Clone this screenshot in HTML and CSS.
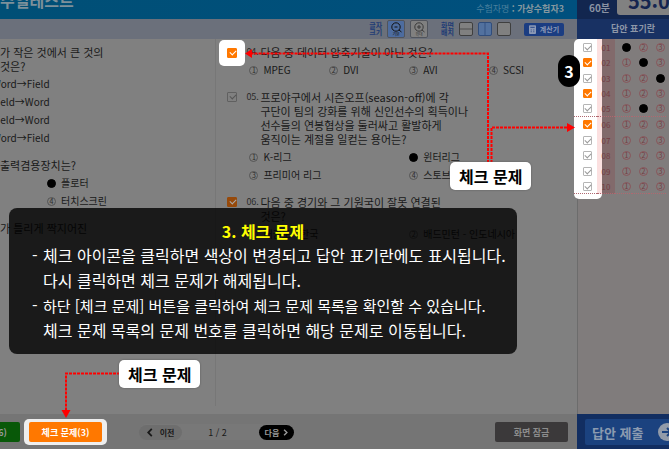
FILE: index.html
```html
<!DOCTYPE html>
<html lang="ko">
<head>
<meta charset="utf-8">
<title>수험 화면 안내 - 체크 문제</title>
<link rel="stylesheet" href="styles.css">
</head>
<body>
<div class="app">
  <header class="topbar">
    <h1 class="title">주일테스트</h1>
    <p class="examinee">수험자명 <b>: 가상수험자3</b></p>
  </header>
  <div class="timer">
    <span class="timer-total">60분</span>
    <span class="timer-left">55:07</span>
  </div>

  <div class="toolbar">
    <span class="tool-label">글자<br>크기</span>
    <button class="zoom zoom-on" type="button"><svg viewBox="0 0 18 18"><circle cx="9" cy="7" r="4.200"/><path d="M12 10l2.500 2M7.500 7h3"/></svg><span>기본</span></button>
    <button class="zoom" type="button"><svg viewBox="0 0 18 18"><circle cx="9" cy="7" r="4.200"/><path d="M12 10l2.500 2M7 7h4M9 5v4"/></svg><span>확대</span></button>
    <span class="tool-label tool-label-layout">화면<br>배치</span>
    <button class="layout" type="button" aria-label="가로 분할"><svg viewBox="0 0 14 14"><path d="M0 7h14"/></svg></button>
    <button class="layout layout-on" type="button" aria-label="세로 분할"><svg viewBox="0 0 14 14"><path d="M7 0v14"/></svg></button>
    <button class="layout" type="button" aria-label="한 화면"></button>
    <button class="calc" type="button"><svg viewBox="0 0 8 10"><rect width="8" height="10" rx="1" fill="#8c99b5"/><path d="M1.500 2.500h5M2 5.500h1M5 5.500h1M2 7.500h1M5 7.500h1" stroke="#1b3d82"/></svg>계산기</button>
  </div>
  <h2 class="sheet-title">답안 표기란</h2>

  <main class="questions">
    <section class="pane pane-left">
      <article class="question">
        <p class="stem">가 작은 것에서 큰 것의<br>것은?</p>
        <ul class="choices choices-cut">
          <li>Word→Field</li>
          <li>Field→Word</li>
          <li>Field→Word</li>
          <li>Word→Field</li>
        </ul>
      </article>
      <article class="question">
        <p class="stem">출력겸용장치는?</p>
        <ul class="choices choices-second">
          <li><i class="num picked"></i>플로터</li>
          <li><i class="num">4</i>터치스크린</li>
        </ul>
      </article>
      <article class="question">
        <p class="stem">가 틀리게 짝지어진</p>
      </article>
    </section>
    <section class="pane pane-right">
      <article class="question numbered">
        <input class="check" type="checkbox" aria-label="4번 체크" checked>
        <span class="qno">04.</span>
        <p class="stem">다음 중 데이터 압축기술이 아닌 것은?</p>
        <ul class="choices four">
          <li><i class="num">1</i>MPEG</li>
          <li><i class="num">2</i>DVI</li>
          <li><i class="num">3</i>AVI</li>
          <li><i class="num">4</i>SCSI</li>
        </ul>
      </article>
      <article class="question numbered">
        <input class="check" type="checkbox" aria-label="5번 체크">
        <span class="qno">05.</span>
        <p class="stem">프로야구에서 시즌오프(season-off)에 각<br>구단이 팀의 강화를 위해 신인선수의 획득이나<br>선수들의 연봉협상을 둘러싸고 활발하게<br>움직이는 계절을 일컫는 용어는?</p>
        <ul class="choices two">
          <li><i class="num">1</i>K-리그</li>
          <li><i class="num picked"></i>윈터리그</li>
          <li><i class="num">3</i>프리미어 리그</li>
          <li><i class="num">4</i>스토브리그</li>
        </ul>
      </article>
      <article class="question numbered">
        <input class="check" type="checkbox" aria-label="6번 체크" checked>
        <span class="qno">06.</span>
        <p class="stem">다음 중 경기와 그 기원국이 잘못 연결된<br>것은?</p>
        <ul class="choices two">
          <li><i class="num">1</i>태권도 - 한국</li>
          <li><i class="num">2</i>배드민턴 - 인도네시아</li>
        </ul>
      </article>
    </section>
  </main>

  <aside class="sheet">
    <table class="answers">
      <tbody>
        <tr><td><input class="check" type="checkbox" aria-label="01 체크"></td><th scope="row">01</th><td><input class="bubble" type="radio" name="a1" value="1" aria-label="1" checked></td><td><input class="bubble" type="radio" name="a1" value="2" aria-label="2"></td><td><input class="bubble" type="radio" name="a1" value="3" aria-label="3"></td></tr>
        <tr><td><input class="check" type="checkbox" aria-label="02 체크" checked></td><th scope="row">02</th><td><input class="bubble" type="radio" name="a2" value="1" aria-label="1"></td><td><input class="bubble" type="radio" name="a2" value="2" aria-label="2" checked></td><td><input class="bubble" type="radio" name="a2" value="3" aria-label="3"></td></tr>
        <tr><td><input class="check" type="checkbox" aria-label="03 체크"></td><th scope="row">03</th><td><input class="bubble" type="radio" name="a3" value="1" aria-label="1"></td><td><input class="bubble" type="radio" name="a3" value="2" aria-label="2"></td><td><input class="bubble" type="radio" name="a3" value="3" aria-label="3" checked></td></tr>
        <tr><td><input class="check" type="checkbox" aria-label="04 체크" checked></td><th scope="row">04</th><td><input class="bubble" type="radio" name="a4" value="1" aria-label="1"></td><td><input class="bubble" type="radio" name="a4" value="2" aria-label="2"></td><td><input class="bubble" type="radio" name="a4" value="3" aria-label="3"></td></tr>
        <tr class="group-end"><td><input class="check" type="checkbox" aria-label="05 체크"></td><th scope="row">05</th><td><input class="bubble" type="radio" name="a5" value="1" aria-label="1"></td><td><input class="bubble" type="radio" name="a5" value="2" aria-label="2" checked></td><td><input class="bubble" type="radio" name="a5" value="3" aria-label="3"></td></tr>
        <tr><td><input class="check" type="checkbox" aria-label="06 체크" checked></td><th scope="row">06</th><td><input class="bubble" type="radio" name="a6" value="1" aria-label="1"></td><td><input class="bubble" type="radio" name="a6" value="2" aria-label="2"></td><td><input class="bubble" type="radio" name="a6" value="3" aria-label="3"></td></tr>
        <tr><td><input class="check" type="checkbox" aria-label="07 체크"></td><th scope="row">07</th><td><input class="bubble" type="radio" name="a7" value="1" aria-label="1"></td><td><input class="bubble" type="radio" name="a7" value="2" aria-label="2"></td><td><input class="bubble" type="radio" name="a7" value="3" aria-label="3"></td></tr>
        <tr><td><input class="check" type="checkbox" aria-label="08 체크"></td><th scope="row">08</th><td><input class="bubble" type="radio" name="a8" value="1" aria-label="1"></td><td><input class="bubble" type="radio" name="a8" value="2" aria-label="2"></td><td><input class="bubble" type="radio" name="a8" value="3" aria-label="3"></td></tr>
        <tr><td><input class="check" type="checkbox" aria-label="09 체크"></td><th scope="row">09</th><td><input class="bubble" type="radio" name="a9" value="1" aria-label="1"></td><td><input class="bubble" type="radio" name="a9" value="2" aria-label="2"></td><td><input class="bubble" type="radio" name="a9" value="3" aria-label="3"></td></tr>
        <tr class="group-end"><td><input class="check" type="checkbox" aria-label="10 체크"></td><th scope="row">10</th><td><input class="bubble" type="radio" name="a10" value="1" aria-label="1"></td><td><input class="bubble" type="radio" name="a10" value="2" aria-label="2"></td><td><input class="bubble" type="radio" name="a10" value="3" aria-label="3"></td></tr>
      </tbody>
    </table>
  </aside>

  <footer class="bottombar">
    <button class="btn btn-unsolved" type="button">(6)</button>
    <span class="spot-button"><button class="btn btn-check" type="button">체크 문제(3)</button></span>
    <nav class="pager">
      <button class="page-prev" type="button"><svg viewBox="0 0 6 10"><path d="M5 1L1 5l4 4"/></svg>이전</button>
      <span class="page-now">1 / 2</span>
      <button class="page-next" type="button">다음<svg viewBox="0 0 6 10"><path d="M1 1l4 4-4 4"/></svg></button>
    </nav>
    <button class="btn btn-lock" type="button">화면 잠금</button>
  </footer>
  <div class="submitbar">
    <button class="submit" type="button">답안 제출<svg viewBox="0 0 18 18"><circle cx="9" cy="9" r="9" fill="#929ba9"/><path d="M4 9h9M9 5l4 4-4 4" fill="none" stroke="#1b427f" stroke-width="2"/></svg></button>
  </div>

  <div class="spot-question"><span class="check check-lit"></span></div>

  <section class="guide">
    <h2>3. 체크 문제</h2>
    <ul>
      <li>체크 아이콘을 클릭하면 색상이 변경되고 답안 표기란에도 표시됩니다.<br>다시 클릭하면 체크 문제가 해제됩니다.</li>
      <li><span class="dense">하단 [체크 문제] 버튼을 클릭하여 체크 문제 목록을 확인할 수 있습니다.</span><br>체크 문제 목록의 문제 번호를 클릭하면 해당 문제로 이동됩니다.</li>
    </ul>
  </section>

  <svg class="arrows" width="669" height="449" viewBox="0 0 669 449" aria-hidden="true">
    <g fill="none" stroke="#f00" stroke-width="2" stroke-dasharray="3 1">
      <path d="M488 163V53.500H252"/>
      <path d="M491.500 163V127.500H568"/>
      <path d="M120 373.500H66V411"/>
    </g>
    <path fill="#f00" d="M245 53.500l7-4.500v9zM575 127.500l-8-4.500v9zM66 418l-4.500-8h9z"/>
  </svg>
  <div class="callout callout-list">체크 문제</div>
  <div class="callout callout-button">체크 문제</div>
  <div class="step">3</div>
</div>
</body>
</html>
```
FILE: styles.css
```css
* { box-sizing: border-box; }
body, h1, h2, p, ul { margin: 0; padding: 0; }
ul { list-style: none; }
body {
  overflow: hidden;
  font-family: "Noto Sans CJK KR", "Noto Sans", sans-serif;
  font-size: 10px;
  color: #191919;
}
button {
  border: 0;
  padding: 0;
  font: inherit;
  color: inherit;
  white-space: nowrap;
}
.app {
  position: relative;
  display: grid;
  grid-template-columns: minmax(0, 1fr) 92px;
  grid-template-rows: 19px 20px 1fr 35px;
  height: 100vh;
  overflow: hidden;
  background: #808080;
}

/* top bar */
.topbar {
  display: flex;
  justify-content: space-between;
  padding-right: 13px;
  background: linear-gradient(90deg, #004f76, #00507e);
}
.title {
  height: 20px;
  margin-top: -10px;
  font-size: 16px;
  line-height: 20px;
  color: #7d909a;
}
.examinee { font-size: 9px; line-height: 18px; color: #487f9c; }
.examinee b { color: #86989f; }
.timer {
  display: flex;
  justify-content: space-between;
  padding-left: 12px;
  background: #12264f;
  overflow: hidden;
}
.timer-total { font-size: 10px; font-weight: 700; line-height: 15px; color: #8a93a3; }
.timer-left {
  width: 52px;
  height: 15px;
  padding-left: 11px;
  border-radius: 0 0 0 3px;
  background: #818181;
  color: #152550;
  font: 700 20px/1px "Noto Sans CJK KR", sans-serif;
}

/* tools */
.toolbar {
  display: flex;
  align-items: center;
  justify-content: flex-end;
  gap: 5px;
  padding-right: 13px;
  background: #6b707b;
}
.tool-label { font-size: 7px; font-weight: 700; line-height: 7px; color: #1f3c75; }
.tool-label-layout { margin-left: 8px; }
.zoom {
  display: flex;
  flex-direction: column;
  align-items: center;
  position: relative;
  width: 18px;
  height: 18px;
  border: 1px solid #50545c;
  border-radius: 2px;
  background: #808080;
  color: #3a3a3a;
}
.zoom-on { background: #4d6c9f; color: #111; }
.zoom svg { width: 18px; height: 18px; flex: none; margin-top: -1px; fill: none; stroke: currentColor; }
.zoom span { position: absolute; bottom: 0; font-size: 4px; line-height: 5px; }
.layout {
  display: flex;
  width: 14px;
  height: 14px;
  border: 1px solid #3f3f3f;
  border-radius: 2px;
  background: #808080;
}
.layout-on { background: #52719f; border-color: #304d7c; }
.layout svg { width: 12px; height: 12px; stroke: #444; }
.layout-on svg { stroke: #304d7c; }
.calc {
  display: flex;
  align-items: center;
  justify-content: center;
  gap: 4px;
  width: 40px;
  height: 13px;
  margin-left: 8px;
  border-radius: 2px;
  background: #1b3d82;
  color: #8c99b5;
  font-size: 7px;
  font-weight: 700;
}
.calc svg { width: 7px; height: 9px; }
.sheet-title {
  padding-left: 20px;
  background: #183163;
  color: #8d97a8;
  font-size: 9px;
  line-height: 20px;
  text-align: center;
}

/* questions */
.questions { display: grid; grid-template-columns: 3fr 5fr; min-height: 0; padding-bottom: 8px; }
.pane { padding-top: 6px; white-space: nowrap; }
.pane-left { border-right: 1px solid #777; }
.pane-right { padding: 6px 8px 0 11px; }
.question { margin-bottom: 11px; }
.numbered { display: grid; grid-template-columns: 19px 14px minmax(0, 1fr); }
.stem { font-size: 11px; line-height: 14px; }
.qno { line-height: 14px; color: #2b2b2b; font-size: 9px; }
.choices { margin-top: 2px; font-size: 10px; line-height: 18px; }
.choices li { display: flex; align-items: center; gap: 5px; }
.choices-cut { margin-left: -8px; }
.choices-second { padding-left: 47px; }
.numbered .choices { grid-column: 1 / -1; display: grid; padding-left: 22px; }
.four { grid-template-columns: repeat(4, 1fr); }
.two { grid-template-columns: repeat(2, 1fr); }
.num {
  width: 9px;
  height: 9px;
  border: 1px solid #555;
  border-radius: 50%;
  font-size: 7px;
  font-style: normal;
  line-height: 7px;
  text-align: center;
  color: #2b2b2b;
}
.picked { background: #000; border-color: #000; }

/* tick boxes */
.check {
  appearance: none;
  display: block;
  position: relative;
  width: 10px;
  height: 10px;
  margin: 2px 0;
  border: 1px solid #606060;
  border-radius: 1px;
}
.check::after {
  content: "";
  position: absolute;
  left: 2px;
  top: 1px;
  width: 5px;
  height: 3px;
  border: solid #555;
  border-width: 0 0 1px 1px;
  transform: rotate(-45deg);
}
.check:checked { background: #96490a; border-color: #96490a; }
.check:checked::after { border-color: #aaa; }
.answers .check { width: 9px; height: 9px; margin: 0 auto; border-color: #b5b5b5; }
.answers .check::after { left: 1px; border-color: #999; }
.answers .check:checked, .check-lit { background: #ff7800; border-color: #ff7800; }
.answers .check:checked::after, .check-lit::after { border-color: #fff; }

/* answer sheet */
.sheet {
  position: relative;
  min-width: 0;
  border-left: 1px solid #6c6c6c;
  background: #807c7c;
}
.answers {
  width: 92px;
  margin-left: -4px;
  border-spacing: 0;
  table-layout: fixed;
  border-radius: 5px 0 0 0;
  background: linear-gradient(#fff, #fff) 0 0 / 28px 100% no-repeat;
}
.sheet::after {
  content: "";
  position: absolute;
  left: -4px;
  top: 155px;
  width: 28px;
  height: 5px;
  border-radius: 0 0 5px 5px;
  background: #fff;
}
.answers tr:nth-child(odd) { height: 16px; }
.answers tr:nth-child(even) { height: 15px; }
.answers td, .answers th { padding: 0; text-align: center; vertical-align: middle; }
.answers td { width: 17px; padding-left: 6px; }
.answers td:first-child { width: 23px; padding-left: 3px; }
.answers th {
  width: 18px;
  background: linear-gradient(90deg, #fbe0e0 5px, #826a6b 5px);
  color: #743c43;
  font-size: 8px;
  font-weight: 400;
  line-height: 9px;
}
.answers tr:first-child th { border-radius: 0 1px 0 0; }
.group-end td, .group-end th { border-bottom: 1px dotted #b06870; }
.bubble {
  appearance: none;
  display: block;
  width: 9px;
  height: 9px;
  margin: 0 auto;
  border: 1px solid #8a555a;
  border-radius: 50%;
  color: #743c43;
  font: 7px/7px "Noto Sans CJK KR", sans-serif;
  text-align: center;
}
.bubble::before { content: attr(value); display: block; }
.bubble:checked { background: #000; border-color: #000; }
.bubble:checked::before { content: ""; }

/* bottom bar */
.bottombar {
  display: flex;
  align-items: center;
  padding: 1px 9px 0 0;
  background: #757575;
}
.btn {
  height: 20px;
  border-radius: 2px;
  font-size: 9px;
  font-weight: 700;
  color: #999;
}
.btn-unsolved {
  display: flex;
  align-items: center;
  justify-content: flex-end;
  width: 20px;
  padding-right: 13px;
  border-radius: 0 2px 2px 0;
  background: #085808;
}
.spot-button {
  margin: 0 32px 0 4px;
  padding: 3px 5px;
  border-radius: 5px;
  background: #eee;
}
.btn-check { display: block; width: 73px; background: #ff7800; color: #fff; }
.pager {
  display: flex;
  align-items: center;
  justify-content: space-between;
  width: 155px;
  height: 16px;
  border-radius: 8px;
  background: #787878;
}
.page-prev, .page-next {
  display: flex;
  align-items: center;
  justify-content: center;
  height: 15px;
  border-radius: 8px;
  font-size: 8px;
  font-weight: 700;
}
.page-prev { gap: 7px; width: 43px; background: #6e6e6e; }
.page-next { gap: 4px; width: 35px; background: #000; color: #999; }
.pager svg { width: 6px; height: 9px; fill: none; stroke: currentColor; stroke-width: 2; }
.page-next svg { width: 5px; height: 7px; }
.page-now { padding-right: 6px; font-size: 9px; }
.btn-lock { width: 73px; margin-left: auto; background: #3b393a; color: #8c8c8c; }
.submitbar { padding: 5px 0 4px 8px; background: #122e61; overflow: hidden; }
.submit {
  display: flex;
  align-items: center;
  gap: 15px;
  width: 100%;
  height: 26px;
  padding-left: 7px;
  border-radius: 2px 0 0 2px;
  background: #1b427f;
  color: #8c9bb0;
  font-size: 13px;
  font-weight: 700;
}
.submit svg { flex: none; width: 18px; height: 18px; }

/* guide layer over the exam screen */
.spot-question {
  position: absolute;
  left: 219px;
  top: 40px;
  padding: 6px 8px;
  border-radius: 5px;
  background: #fff;
}
.guide {
  position: absolute;
  left: 9px;
  top: 208px;
  width: 508px;
  padding: 11px 22px;
  border-radius: 8px;
  background: rgba(0, 0, 0, .8);
  color: #fff;
  font-size: 16px;
  font-weight: 400;
  line-height: 25px;
  white-space: nowrap;
}
.guide h2 { color: #ff0; font-size: 16px; line-height: 24px; text-align: center; }
.guide li { padding-left: 12px; }
.guide li::before { content: "-"; float: left; margin-left: -11px; }
.dense { font-size: 15px; }
.arrows { position: absolute; left: 0; top: 0; pointer-events: none; }
.callout {
  position: absolute;
  padding: 0 9px;
  border-radius: 5px;
  background: #fff;
  color: #000;
  font-size: 16px;
  font-weight: 700;
  line-height: 28px;
  box-shadow: 0 0 2px #555;
}
.callout-list { left: 450px; top: 162px; }
.callout-button { left: 119px; top: 360px; }
.step {
  position: absolute;
  left: 558px;
  top: 55px;
  width: 22px;
  border-radius: 11px;
  background: #000;
  color: #fff;
  font-size: 16px;
  font-weight: 700;
  line-height: 32px;
  text-align: center;
}
```
